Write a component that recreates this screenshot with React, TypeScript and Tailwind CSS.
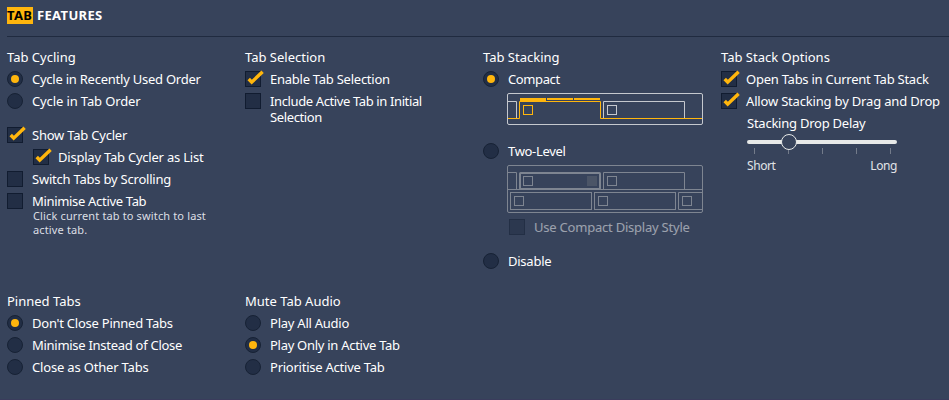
import type { ReactNode } from 'react';
import { clsx } from 'clsx';

interface OptionProps {
  children: ReactNode;
  checked?: boolean;
  disabled?: boolean;
  className?: string;
  tracking?: string;
}

function Radio({ children, checked, className, tracking = 'tracking-[-0.24px]' }: OptionProps) {
  return (
    <label className={clsx('flex gap-[9px] leading-4 py-[3px]', className)}>
      <span className="w-4 h-4 shrink-0 rounded-full border border-[#172235] bg-[#222e45] flex items-center justify-center">
        {checked && <span className="w-2 h-2 rounded-full bg-[#ffb60d]" />}
      </span>
      <span className={clsx('whitespace-nowrap', tracking)}>{children}</span>
    </label>
  );
}

function Checkbox({ children, checked, disabled, className, tracking = 'tracking-[-0.22px]' }: OptionProps) {
  return (
    <label className={clsx('flex gap-[9px] leading-4 py-[3px]', disabled && 'opacity-50', className)}>
      <span className="w-4 h-4 shrink-0 border border-[#111c30] bg-[#222e45]">
        {checked && (
          <svg className="block -mt-0.5 overflow-visible" width="18" height="16" viewBox="0 0 18 16" fill="none" aria-hidden="true">
            <path d="M2.7 9 5.7 12.2 16.6 1.7" stroke="#ffb60d" strokeWidth="3.4" />
          </svg>
        )}
      </span>
      <span className={clsx('whitespace-nowrap', tracking)}>{children}</span>
    </label>
  );
}

function Group({ title, children }: { title: string; children: ReactNode }) {
  return (
    <section className="w-[238px] shrink-0">
      <h3 className="h-[22px] leading-[22px]">{title}</h3>
      {children}
    </section>
  );
}

function CompactPreview() {
  return (
    <svg className="block ml-6 mt-[3px]" width="196" height="32" fill="none" stroke="#c5c8ce" aria-hidden="true">
      <rect x=".5" y=".5" width="195" height="31" rx="1.5" />
      <path d="M1 8.5h8.5V25M96.5 25V8.5h81V25" />
      <rect x="100.5" y="12.5" width="9" height="9" />
      <g stroke="#ffb60d">
        <path d="M1 25.5h11.5v-17h81v17H195" />
        <rect x="16.5" y="12.5" width="9" height="9" />
      </g>
      <path d="M13 5h26v3H13zM40 5h26v2H40zM67 5h26v2H67z" fill="#ffb60d" stroke="none" />
    </svg>
  );
}

function TwoLevelPreview() {
  return (
    <svg className="block ml-6 mt-[3px]" width="196" height="48" fill="none" stroke="#7e8591" aria-hidden="true">
      <rect x=".5" y=".5" width="195" height="47" rx="1.5" />
      <path d="M1 7.5h8.5V24M96.5 24V7.5h81V24M1 24.5h194" />
      <rect x="13" y="8" width="80" height="16" rx=".5" strokeWidth="2" />
      <rect x="16.5" y="11.5" width="9" height="9" />
      <rect x="80" y="11" width="10" height="10" fill="#4b5567" stroke="none" />
      <rect x="100.5" y="11.5" width="9" height="9" />
      <rect x="3.5" y="27.5" width="81" height="17" />
      <rect x="87.5" y="27.5" width="81" height="17" />
      <path d="M195 27.5h-23.5v17H195" />
      <rect x="7.5" y="31.5" width="9" height="9" />
      <rect x="91.5" y="31.5" width="9" height="9" />
      <rect x="175.5" y="31.5" width="9" height="9" />
    </svg>
  );
}

function DelaySlider() {
  return (
    <div className="ml-[26px] w-[150px]">
      <div className="h-[22px] leading-[22px] whitespace-nowrap tracking-[-0.24px]">Stacking Drop Delay</div>
      <svg className="block overflow-visible" width="150" height="24" fill="none" aria-hidden="true">
        <rect y="6" width="150" height="4" rx="2" fill="#e7e9e8" />
        <path d="M7.5 14v6M41.5 14v6M75.5 14v6M109.5 14v6M143.5 14v6" stroke="#737b8a" />
        <circle cx="42" cy="8" r="7.5" fill="#37435b" stroke="#e7e9e8" />
      </svg>
      <div className="flex justify-between text-[12px] leading-4 tracking-[-0.4px] text-[#e1e3e7]">
        <span>Short</span>
        <span>Long</span>
      </div>
    </div>
  );
}

export default function App() {
  return (
    <main className="w-[949px] h-[400px] overflow-hidden bg-[#37435b] border-b border-[#3a3c5c] text-white text-[13px] font-['Noto_Sans',sans-serif] pl-[7px]">
      <h2 className="h-[37px] border-b border-[#202b40] pt-[7px] flex gap-1 font-bold leading-[17px]">
        <span className="w-[26px] h-[17px] bg-[#ffb60d] text-black tracking-[0.3px]">TAB</span>
        <span className="tracking-[0.35px]">FEATURES</span>
      </h2>

      <div className="flex h-[244px] pt-[9px]">
        <Group title="Tab Cycling">
          <Radio checked>Cycle in Recently Used Order</Radio>
          <Radio tracking="tracking-[-0.12px]">Cycle in Tab Order</Radio>
          <Checkbox checked className="mt-3">Show Tab Cycler</Checkbox>
          <Checkbox checked className="ml-[26px]">Display Tab Cycler as List</Checkbox>
          <Checkbox>Switch Tabs by Scrolling</Checkbox>
          <Checkbox tracking="tracking-[-0.32px]">Minimise Active Tab</Checkbox>
          <p className="ml-[26px] -mt-[3px] text-[11px] leading-[14px] tracking-[0.14px] text-[#dcdfe4]">
            Click current tab to switch to last<br />active tab.
          </p>
        </Group>

        <Group title="Tab Selection">
          <Checkbox checked tracking="tracking-[-0.25px]">Enable Tab Selection</Checkbox>
          <Checkbox tracking="tracking-[-0.38px]">Include Active Tab in Initial<br />Selection</Checkbox>
        </Group>

        <Group title="Tab Stacking">
          <Radio checked tracking="tracking-[-0.38px]">Compact</Radio>
          <CompactPreview />
          <Radio className="mt-[15px]" tracking="tracking-[-0.32px]">Two-Level</Radio>
          <TwoLevelPreview />
          <Checkbox disabled className="ml-[26px] mt-[3px]">Use Compact Display Style</Checkbox>
          <Radio className="mt-3">Disable</Radio>
        </Group>

        <Group title="Tab Stack Options">
          <Checkbox checked tracking="tracking-[-0.25px]">Open Tabs in Current Tab Stack</Checkbox>
          <Checkbox checked tracking="tracking-[-0.18px]">Allow Stacking by Drag and Drop</Checkbox>
          <DelaySlider />
        </Group>
      </div>

      <div className="flex pt-[9px]">
        <Group title="Pinned Tabs">
          <Radio checked>Don't Close Pinned Tabs</Radio>
          <Radio tracking="tracking-[-0.28px]">Minimise Instead of Close</Radio>
          <Radio tracking="tracking-[-0.18px]">Close as Other Tabs</Radio>
        </Group>
        <Group title="Mute Tab Audio">
          <Radio>Play All Audio</Radio>
          <Radio checked tracking="tracking-[-0.28px]">Play Only in Active Tab</Radio>
          <Radio>Prioritise Active Tab</Radio>
        </Group>
      </div>
    </main>
  );
}
